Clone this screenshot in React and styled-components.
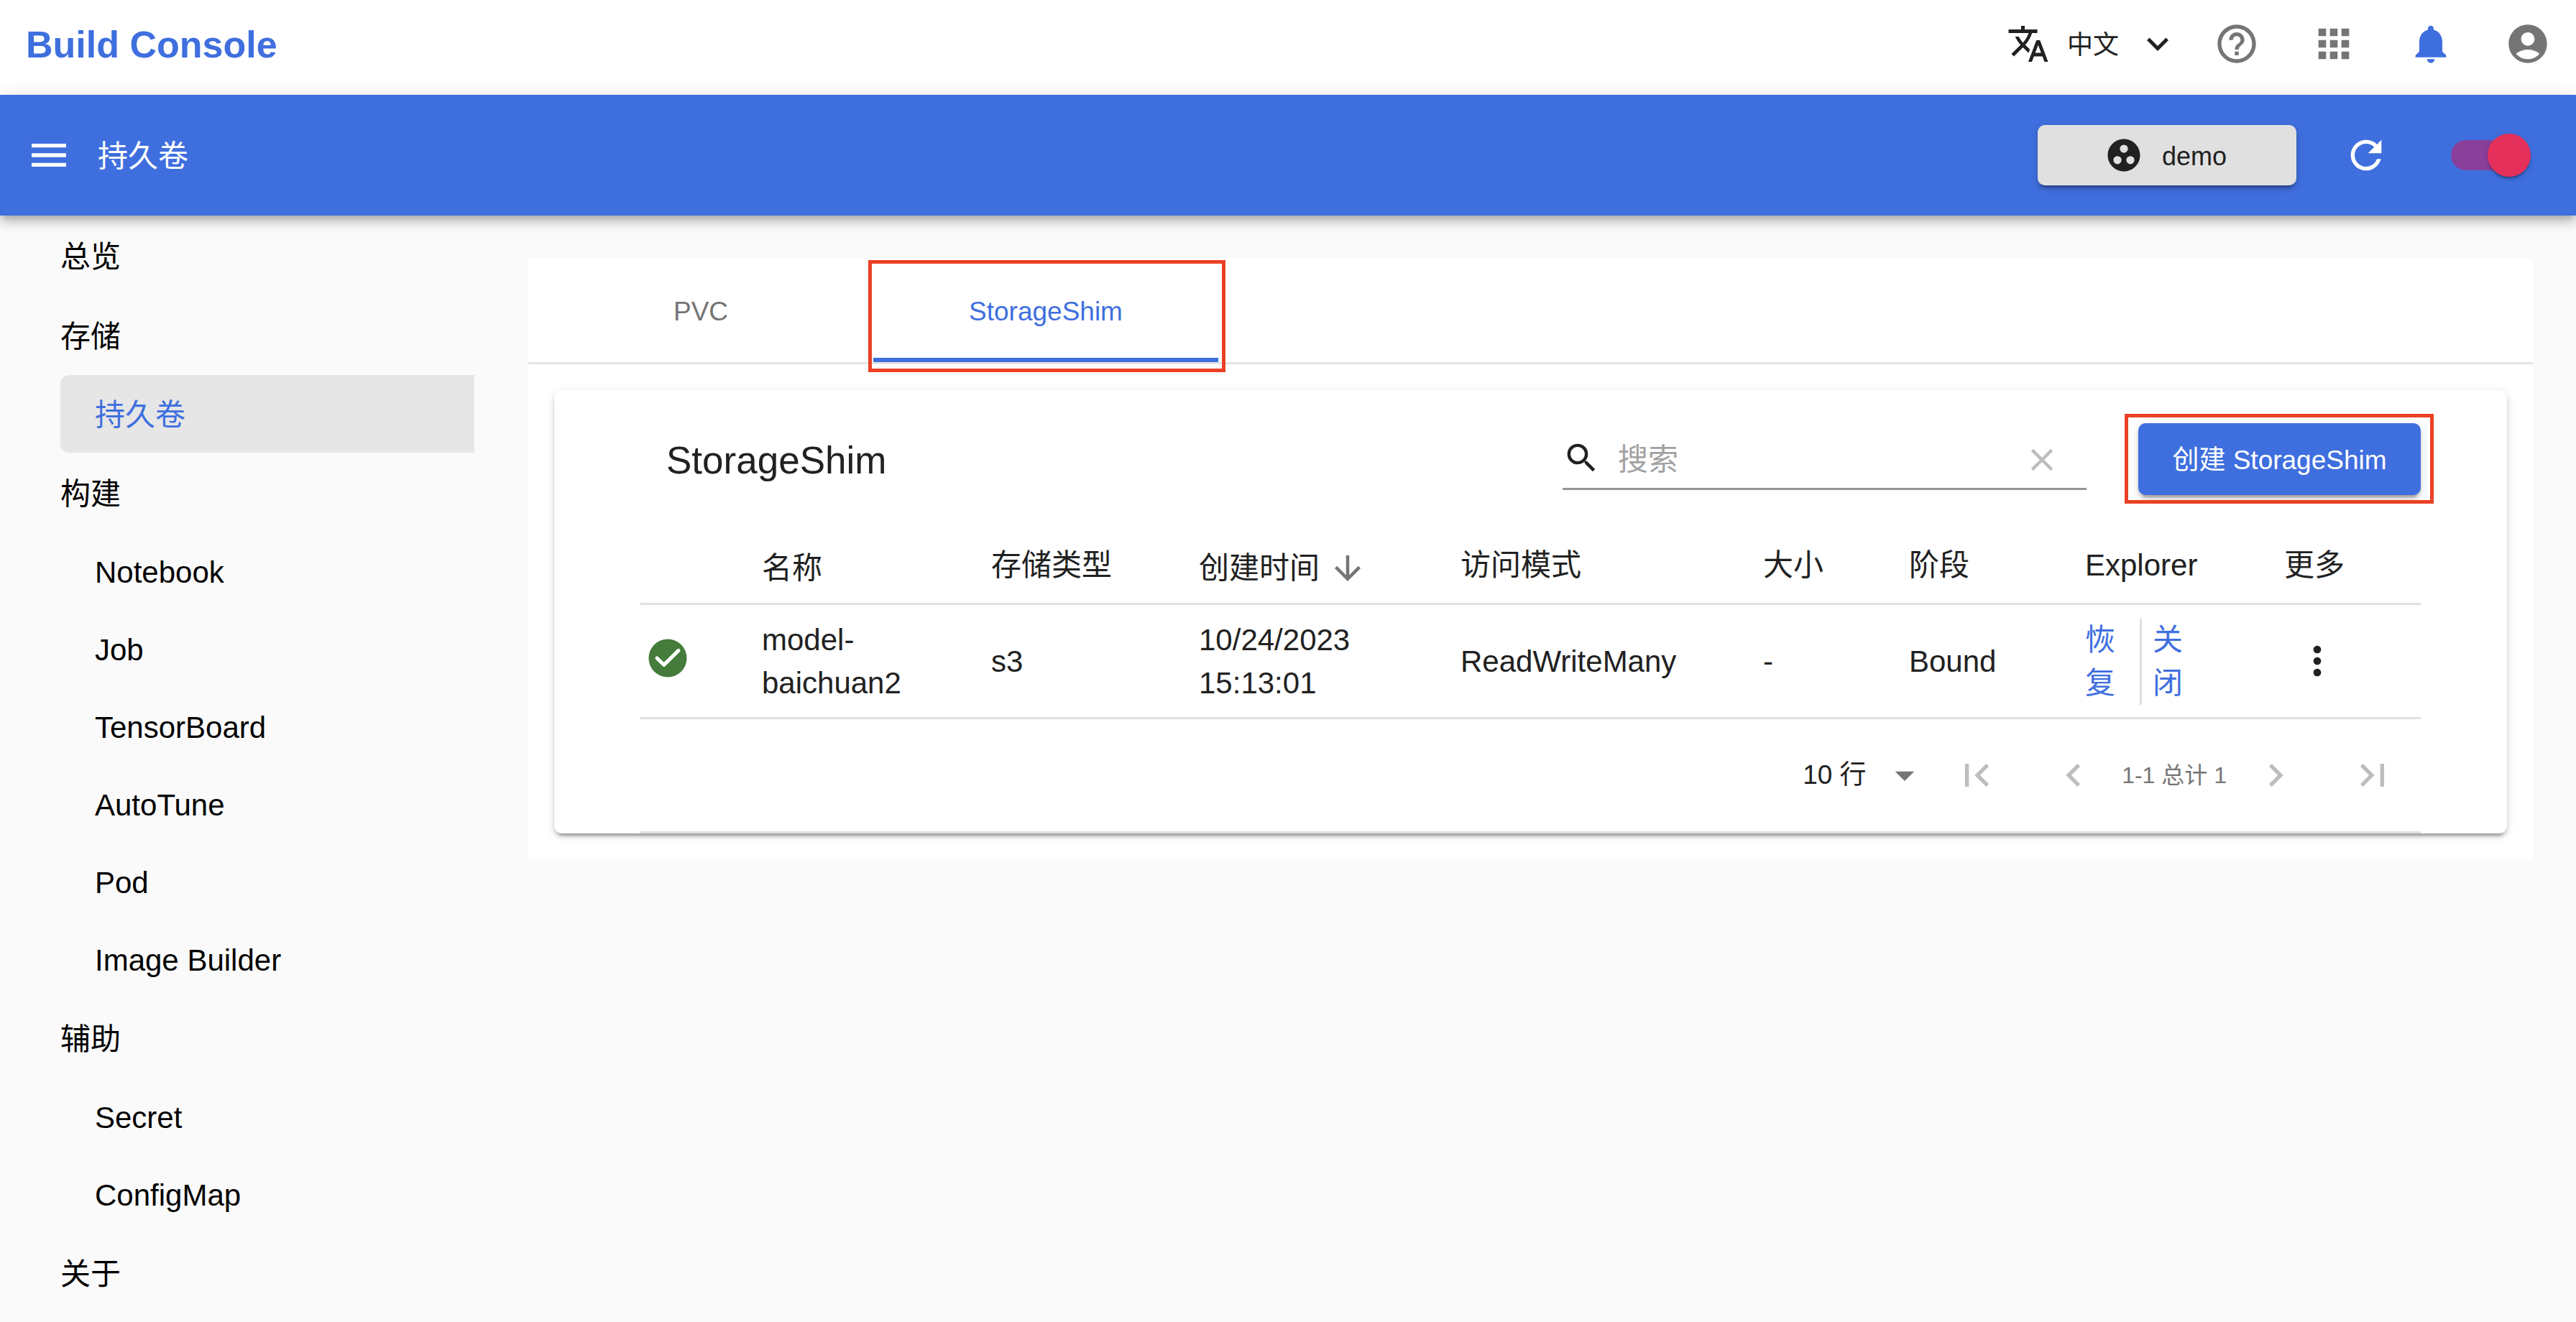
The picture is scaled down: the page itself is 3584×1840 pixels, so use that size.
import React from 'react';
import styled, { createGlobalStyle, css } from 'styled-components';
import {
  MdTranslate,
  MdExpandMore,
  MdHelpOutline,
  MdApps,
  MdNotifications,
  MdAccountCircle,
  MdMenu,
  MdGroupWork,
  MdRefresh,
  MdSearch,
  MdClear,
  MdArrowDownward,
  MdMoreVert,
  MdArrowDropDown,
  MdFirstPage,
  MdLastPage,
  MdChevronLeft,
  MdChevronRight,
} from 'react-icons/md';

const blue = '#3f6fde';
const ink = '#212121';
const grey = '#757575';
const line = '#e0e0e0';
const raised =
  '0 8px 3px -5px rgba(0,0,0,.2), 0 5px 5px rgba(0,0,0,.14), 0 3px 13px rgba(0,0,0,.12)';

const Global = createGlobalStyle`
  *, *::before, *::after { box-sizing: border-box; }
  body {
    margin: 0;
    min-height: 100vh;
    background: #fafafa;
    color: ${ink};
    font: 42px/60px "Liberation Sans", "Noto Sans CJK SC", sans-serif;
  }
  button, input, select { font: inherit; color: inherit; }
  button { border: 0; padding: 0; background: none; cursor: pointer; }
  a { color: inherit; text-decoration: none; }
  svg { display: block; flex: none; }
`;

const TopBar = styled.header`
  display: flex;
  align-items: center;
  justify-content: space-between;
  height: 132px;
  padding-left: 36px;
  background: #fff;
`;

const Brand = styled.a`
  padding-bottom: 8px;
  color: ${blue};
  font-size: 52px;
  font-weight: 700;
`;

const TopActions = styled.div`
  display: flex;
  align-items: center;
  padding-bottom: 10px;
`;

const ButtonText = styled.span`
  padding-top: 4px;
`;

const Language = styled.button`
  display: flex;
  align-items: center;
  gap: 24px;
  margin-right: 12px;
  font-size: 36px;
`;

const IconButton = styled.button`
  display: flex;
  align-items: center;
  justify-content: center;
  color: ${(p) => p.$color || grey};
`;

const WideIconButton = styled(IconButton)`
  width: 135px;
  height: 64px;
`;

const AppBar = styled.div`
  position: relative;
  display: flex;
  align-items: center;
  height: 168px;
  padding: 0 63px 0 36px;
  background: ${blue};
  color: #fff;
  box-shadow: 0 5px 10px -3px rgba(0,0,0,.2), 0 10px 13px rgba(0,0,0,.14),
    0 3px 26px rgba(0,0,0,.12);
`;

const PageTitle = styled.h1`
  flex: 1;
  margin: 0 0 0 36px;
  padding-top: 4px;
  font-size: 42px;
  font-weight: 400;
`;

const Workspace = styled.button`
  display: flex;
  align-items: center;
  justify-content: center;
  gap: 26px;
  width: 360px;
  height: 84px;
  padding-right: 4px;
  border-radius: 10px;
  background: #e0e0e0;
  color: ${ink};
  font-size: 36px;
  box-shadow: ${raised};
`;

const Refresh = styled(IconButton)`
  margin: 0 86px 0 65px;
`;

const Switch = styled.label`
  display: flex;
  align-items: center;
  width: 111px;
  height: 60px;
`;

const SwitchInput = styled.input`
  appearance: none;
  display: flex;
  align-items: center;
  width: 102px;
  height: 42px;
  margin: 0;
  padding-left: 51px;
  border-radius: 21px;
  background: #8a3f9a;

  &::before {
    content: '';
    flex: none;
    width: 60px;
    height: 60px;
    border-radius: 50%;
    background: #e4305b;
    box-shadow: 0 5px 3px -3px rgba(0,0,0,.2), 0 3px 3px rgba(0,0,0,.14),
      0 3px 8px rgba(0,0,0,.12);
  }
`;

const Body = styled.div`
  display: flex;
  align-items: flex-start;
`;

const Sidebar = styled.nav`
  flex: none;
  width: 660px;
  padding-left: 84px;
  color: #000;
`;

const NavList = styled.ul`
  margin: 0;
  padding: 0;
  list-style: none;
`;

const NavLink = styled.a`
  display: flex;
  align-items: center;
  height: ${(p) => (p.$child ? 108 : 111)}px;
  padding-top: 4px;
  padding-left: ${(p) => (p.$child ? 48 : 0)}px;
  ${(p) =>
    p.$active &&
    css`
      border-radius: 12px 0 0 12px;
      background: #e6e6e6;
      color: ${blue};
    `}
`;

const Main = styled.main`
  flex: 1;
  min-width: 0;
  padding: 60px 60px 60px 75px;
`;

const Panel = styled.section`
  background: #fff;
`;

const Tabs = styled.div`
  display: flex;
  border-bottom: 3px solid #e4e4e4;
`;

const marked = css`
  position: relative;

  &::after {
    content: '';
    position: absolute;
    inset: ${(p) => p.$mark};
    border: 5px solid #ea4025;
    pointer-events: none;
  }
`;

const Tab = styled.button`
  width: 480px;
  height: 144px;
  padding-top: 10px;
  border-bottom: 6px solid ${(p) => (p.$active ? blue : 'transparent')};
  color: ${(p) => (p.$active ? blue : grey)};
  font-size: 37px;
  ${(p) => p.$mark && marked}
`;

const PanelBody = styled.div`
  padding: 36px;
`;

const Card = styled.div`
  padding: 0 120px;
  border-radius: 11px;
  background: #fff;
  box-shadow: ${raised};
`;

const Toolbar = styled.div`
  display: flex;
  align-items: center;
  height: 192px;
  padding-left: 36px;
`;

const CardTitle = styled.h2`
  flex: 1;
  margin: 0;
  padding-top: 4px;
  font-size: 53px;
  font-weight: 400;
`;

const SearchBox = styled.label`
  display: flex;
  align-items: center;
  width: 729px;
  height: 86px;
  margin-right: 72px;
  border-bottom: 3px solid #949494;
`;

const SearchInput = styled.input`
  flex: 1;
  min-width: 0;
  height: 64px;
  padding: 4px 0 0 24px;
  border: 0;
  outline: 0;
  background: none;

  &::placeholder { color: #a2a2a2; opacity: 1; }
`;

const ClearButton = styled(IconButton)`
  width: 124px;
  height: 60px;
  padding-top: 4px;
`;

const CreateButton = styled.button`
  width: 393px;
  height: 100px;
  padding-top: 4px;
  border-radius: 10px;
  background: ${blue};
  color: #fff;
  font-size: 37px;
  box-shadow: ${raised};
  ${marked}
`;

const Table = styled.table`
  width: 100%;
  table-layout: fixed;
  border-collapse: separate;
  border-spacing: 0;
`;

const Col = styled.col`
  width: ${(p) => p.$w}px;
`;

const Th = styled.th`
  height: 107px;
  padding: 0 0 0 44px;
  border-bottom: 3px solid ${line};
  font-weight: 400;
  text-align: left;
  white-space: nowrap;
`;

const SortButton = styled.button`
  display: flex;
  align-items: center;
  gap: 12px;
  padding-top: 8px;

  svg { color: ${grey}; }
`;

const Td = styled.td`
  padding: 19px 42px 17px 44px;
  border-bottom: 3px solid ${line};
`;

const StatusTd = styled(Td)`
  padding: 0 0 8px 6px;
  color: #457c3b;
`;

const ActionTd = styled(Td)`
  padding-right: 0;
`;

const Actions = styled.div`
  display: flex;
`;

const ActionLink = styled.a`
  box-sizing: content-box;
  width: 42px;
  color: ${blue};
  word-break: break-all;

  & + & {
    margin-left: 34px;
    padding-left: 15px;
    border-left: 3px solid ${line};
  }
`;

const MoreTd = styled(Td)`
  padding: 0 0 0 58px;
`;

const FootTd = styled.td`
  height: 159px;
  padding: 0;
  border-bottom: 3px solid ${line};
`;

const Pagination = styled.div`
  display: flex;
  align-items: center;
  justify-content: flex-end;
`;

const PageSize = styled.label`
  position: relative;

  svg {
    position: absolute;
    top: 0;
    right: 0;
    color: ${grey};
    pointer-events: none;
  }
`;

const PageSizeSelect = styled.select`
  appearance: none;
  display: block;
  width: 174px;
  height: 64px;
  padding: 0;
  border: 0;
  background: none;
  font-size: 37px;
`;

const PageRange = styled.span`
  color: ${grey};
  font-size: 32px;
`;

const nav = [
  { label: '总览' },
  { label: '存储' },
  { label: '持久卷', child: true, active: true },
  { label: '构建' },
  { label: 'Notebook', child: true },
  { label: 'Job', child: true },
  { label: 'TensorBoard', child: true },
  { label: 'AutoTune', child: true },
  { label: 'Pod', child: true },
  { label: 'Image Builder', child: true },
  { label: '辅助' },
  { label: 'Secret', child: true },
  { label: 'ConfigMap', child: true },
  { label: '关于' },
];

const columns = [
  { width: 125 },
  { width: 319, label: '名称', sortable: true },
  { width: 289, label: '存储类型' },
  { width: 364, label: '创建时间', sortable: true, sorted: true },
  { width: 421, label: '访问模式' },
  { width: 203, label: '大小' },
  { width: 245, label: '阶段' },
  { width: 277, label: 'Explorer' },
  { width: 234, label: '更多' },
];

const rows = [
  {
    name: 'model-baichuan2',
    type: 's3',
    created: '10/24/2023 15:13:01',
    mode: 'ReadWriteMany',
    size: '-',
    phase: 'Bound',
  },
];

function ReadyIcon() {
  return (
    <svg width="64" height="64" viewBox="0 0 64 64" role="img" aria-label="Bound">
      <circle cx="32" cy="32" r="26.5" fill="currentColor" />
      <path
        d="M17 32L26.8 41.4L47 21.4"
        fill="none"
        stroke="#fff"
        strokeWidth="5"
        strokeLinecap="round"
        strokeLinejoin="round"
      />
    </svg>
  );
}

function HeadCell({ column }) {
  if (!column.sortable) return <Th scope="col">{column.label}</Th>;
  return (
    <Th scope="col" aria-sort={column.sorted ? 'descending' : undefined}>
      <SortButton type="button">
        {column.label}
        {column.sorted && <MdArrowDownward size={54} />}
      </SortButton>
    </Th>
  );
}

function StorageTable() {
  return (
    <Table>
      <colgroup>
        {columns.map((c, i) => (
          <Col key={i} $w={c.width} />
        ))}
      </colgroup>
      <thead>
        <tr>
          {columns.map((c, i) => (
            <HeadCell key={i} column={c} />
          ))}
        </tr>
      </thead>
      <tbody>
        {rows.map((r) => (
          <tr key={r.name}>
            <StatusTd>
              <ReadyIcon />
            </StatusTd>
            <Td>{r.name}</Td>
            <Td>{r.type}</Td>
            <Td>{r.created}</Td>
            <Td>{r.mode}</Td>
            <Td>{r.size}</Td>
            <Td>{r.phase}</Td>
            <ActionTd>
              <Actions>
                <ActionLink href="#resume">恢复</ActionLink>
                <ActionLink href="#close">关闭</ActionLink>
              </Actions>
            </ActionTd>
            <MoreTd>
              <IconButton type="button" $color={ink}>
                <MdMoreVert size={64} />
              </IconButton>
            </MoreTd>
          </tr>
        ))}
      </tbody>
      <tfoot>
        <tr>
          <FootTd colSpan={columns.length}>
            <Pagination>
              <PageSize>
                <PageSizeSelect defaultValue="10">
                  <option value="10">10 行</option>
                  <option value="20">20 行</option>
                  <option value="50">50 行</option>
                </PageSizeSelect>
                <MdArrowDropDown size={64} />
              </PageSize>
              <WideIconButton type="button" $color="#bdbdbd">
                <MdFirstPage size={64} />
              </WideIconButton>
              <WideIconButton type="button" $color="#bdbdbd">
                <MdChevronLeft size={64} />
              </WideIconButton>
              <PageRange>1-1 总计 1</PageRange>
              <WideIconButton type="button" $color="#bdbdbd">
                <MdChevronRight size={64} />
              </WideIconButton>
              <WideIconButton type="button" $color="#bdbdbd">
                <MdLastPage size={64} />
              </WideIconButton>
            </Pagination>
          </FootTd>
        </tr>
      </tfoot>
    </Table>
  );
}

export default function App() {
  return (
    <>
      <Global />
      <TopBar>
        <Brand href="#home">Build Console</Brand>
        <TopActions>
          <Language type="button">
            <MdTranslate size={60} />
            <ButtonText>中文</ButtonText>
            <MdExpandMore size={60} />
          </Language>
          <WideIconButton type="button">
            <MdHelpOutline size={64} />
          </WideIconButton>
          <WideIconButton type="button">
            <MdApps size={64} />
          </WideIconButton>
          <WideIconButton type="button" $color={blue}>
            <MdNotifications size={64} />
          </WideIconButton>
          <WideIconButton type="button">
            <MdAccountCircle size={64} />
          </WideIconButton>
        </TopActions>
      </TopBar>
      <AppBar>
        <IconButton type="button" $color="#fff">
          <MdMenu size={64} />
        </IconButton>
        <PageTitle>持久卷</PageTitle>
        <Workspace type="button">
          <MdGroupWork size={54} />
          <ButtonText>demo</ButtonText>
        </Workspace>
        <Refresh type="button" $color="#fff">
          <MdRefresh size={64} />
        </Refresh>
        <Switch>
          <SwitchInput type="checkbox" role="switch" defaultChecked />
        </Switch>
      </AppBar>
      <Body>
        <Sidebar>
          <NavList>
            {nav.map((n) => (
              <li key={n.label}>
                <NavLink href="#nav" $child={n.child} $active={n.active}>
                  {n.label}
                </NavLink>
              </li>
            ))}
          </NavList>
        </Sidebar>
        <Main>
          <Panel>
            <Tabs role="tablist">
              <Tab type="button" role="tab">
                PVC
              </Tab>
              <Tab
                type="button"
                role="tab"
                aria-selected="true"
                $active
                $mark="2px -10px -20px -7px"
              >
                StorageShim
              </Tab>
            </Tabs>
            <PanelBody>
              <Card>
                <Toolbar>
                  <CardTitle>StorageShim</CardTitle>
                  <SearchBox>
                    <MdSearch size={53} color={ink} />
                    <SearchInput type="text" placeholder="搜索" />
                    <ClearButton type="button" $color="#bdbdbd">
                      <MdClear size={52} />
                    </ClearButton>
                  </SearchBox>
                  <CreateButton type="button" $mark="-13px -18px -12px -19px">
                    创建 StorageShim
                  </CreateButton>
                </Toolbar>
                <StorageTable />
              </Card>
            </PanelBody>
          </Panel>
        </Main>
      </Body>
    </>
  );
}
